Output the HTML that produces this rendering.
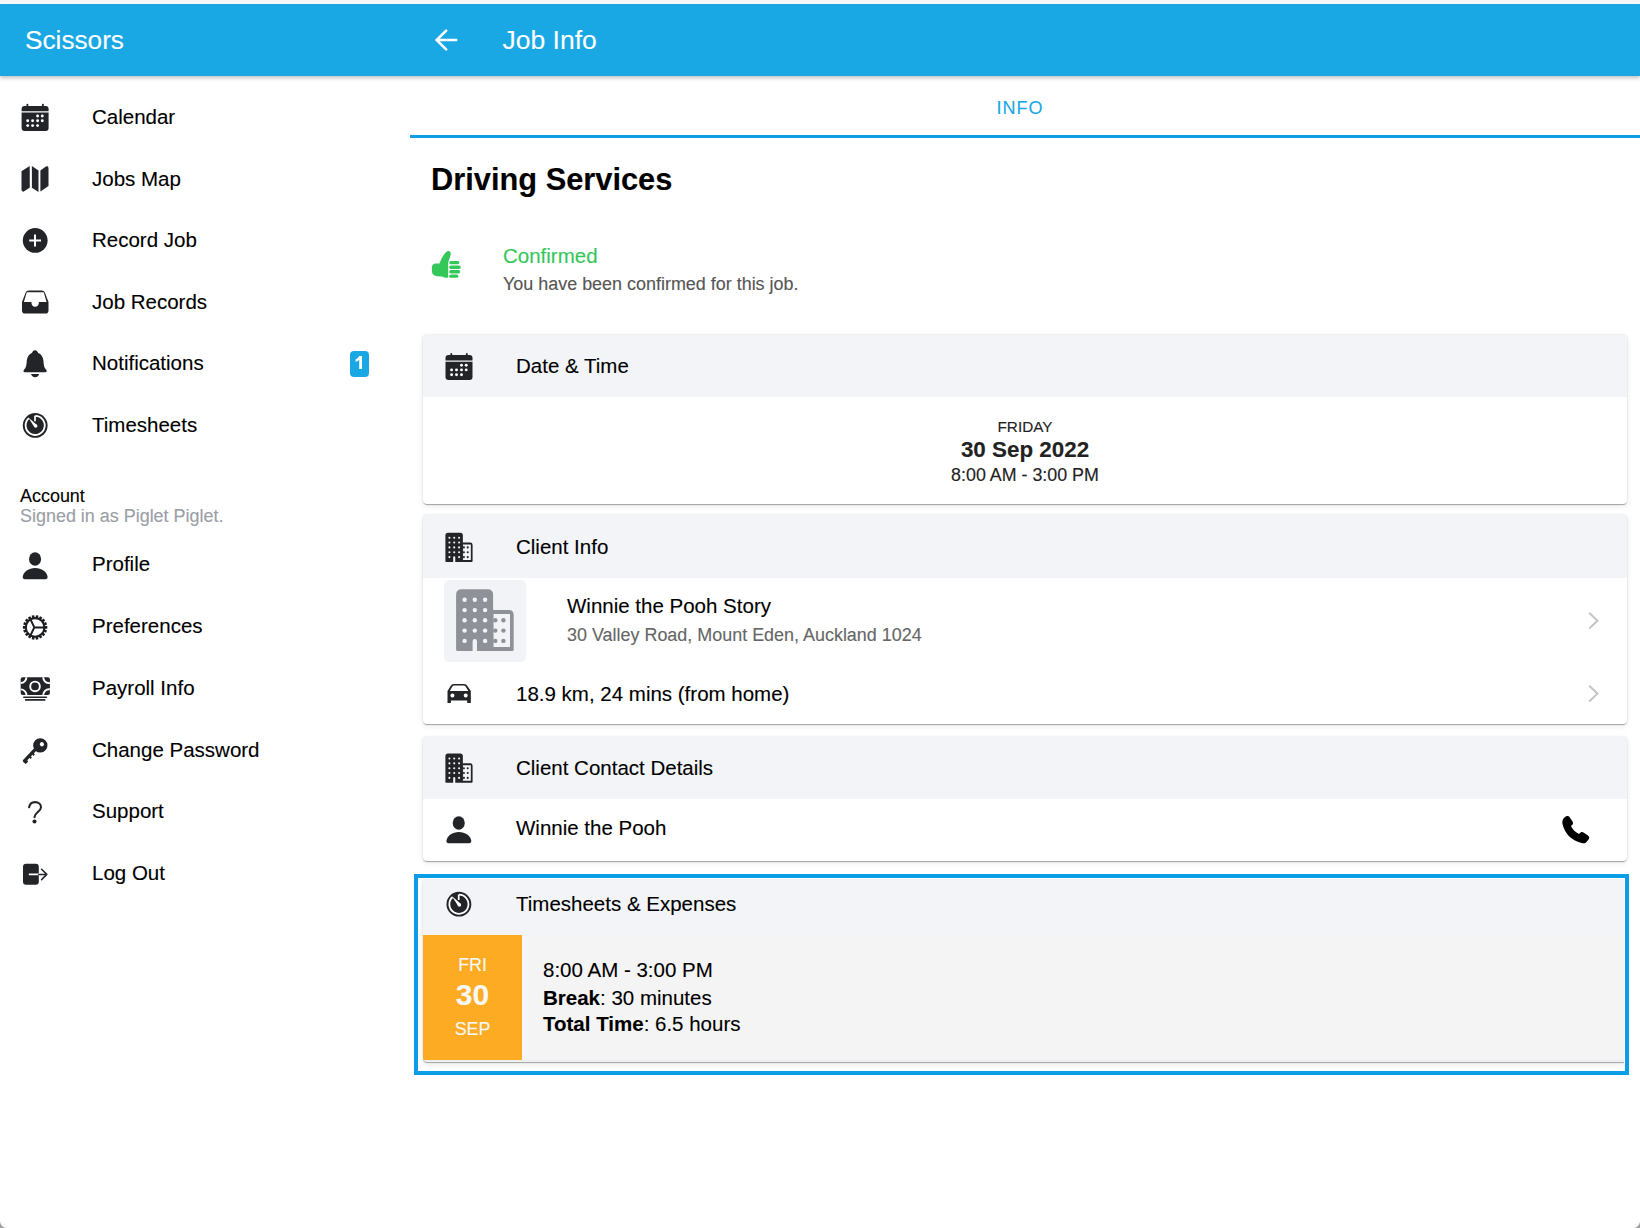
<!DOCTYPE html>
<html><head><meta charset="utf-8">
<style>
html,body{margin:0;padding:0;width:1640px;height:1228px;overflow:hidden;background:#fff;position:relative;font-family:"Liberation Sans",sans-serif;}
.t{position:absolute;line-height:1;white-space:nowrap;-webkit-text-stroke:0.12px currentColor;}
.s20{font-size:20.5px;}
.s18{font-size:17.95px;}
.hdr{position:absolute;left:0;top:4px;width:1640px;height:72px;background:#19a8e4;}
.topstrip{position:absolute;left:0;top:0;width:1640px;height:4px;background:linear-gradient(#f5f5f5 0,#f5f5f5 2px,#fbfcfd 2px,#fbfcfd 4px);}
.card{position:absolute;left:423px;width:1204px;background:#fff;border-radius:4px;box-shadow:0 0 1.5px rgba(0,0,0,.18),0 2px 1px -1px rgba(0,0,0,.22),0 1px 1px rgba(0,0,0,.1),0 2px 6px rgba(0,0,0,.09);overflow:hidden;}
.ch{position:absolute;left:0;top:0;width:100%;background:#f3f4f7;}
.c{text-align:center;}
</style></head><body>
<div class="topstrip"></div>
<div class="hdr" style="box-shadow:0 2px 4px rgba(0,0,0,.25)"></div>
<div class="t" style="left:25px;top:27px;font-size:26.2px;color:#fff">Scissors</div>
<div class="t" style="left:502.5px;top:27px;font-size:26.5px;color:#fff">Job Info</div>

<!-- sidebar -->
<div class="t s20" style="left:92px;top:107px">Calendar</div>
<div class="t s20" style="left:92px;top:169px">Jobs Map</div>
<div class="t s20" style="left:92px;top:230px">Record Job</div>
<div class="t s20" style="left:92px;top:292px">Job Records</div>
<div class="t s20" style="left:92px;top:353px">Notifications</div>
<div class="t s20" style="left:92px;top:414.7px">Timesheets</div>
<div class="t s18" style="left:20px;top:488px">Account</div>
<div class="t s18" style="left:20px;top:508px;color:#9a9ea6">Signed in as Piglet Piglet.</div>
<div class="t s20" style="left:92px;top:554.3px">Profile</div>
<div class="t s20" style="left:92px;top:616px">Preferences</div>
<div class="t s20" style="left:92px;top:677.7px">Payroll Info</div>
<div class="t s20" style="left:92px;top:739.5px">Change Password</div>
<div class="t s20" style="left:92px;top:800.7px">Support</div>
<div class="t s20" style="left:92px;top:863.1px">Log Out</div>
<div style="position:absolute;left:349.5px;top:351px;width:19.5px;height:26px;border-radius:4px;background:#19a8e4"></div>


<!-- main -->
<div class="t" style="left:410px;width:1220px;top:99px;font-size:18px;color:#19a8e4;letter-spacing:1px;text-align:center">INFO</div>
<div style="position:absolute;left:410px;top:135px;width:1230px;height:2.5px;background:#0d9fe3"></div>
<div class="t" style="left:431px;top:165px;font-size:30.8px;font-weight:bold">Driving Services</div>
<div class="t s20" style="left:503px;top:246px;color:#34c759">Confirmed</div>
<div class="t s18" style="left:503px;top:276px;color:#555">You have been confirmed for this job.</div>

<div class="card" style="top:335px;height:169px">
  <div class="ch" style="height:62px"></div>
</div>
<div class="t s20" style="left:516px;top:355.7px">Date &amp; Time</div>
<div class="t c" style="left:825px;width:400px;top:419.4px;font-size:15.3px;color:#222">FRIDAY</div>
<div class="t c" style="left:825px;width:400px;top:439px;font-size:22.4px;font-weight:bold;color:#222">30 Sep 2022</div>
<div class="t c" style="left:825px;width:400px;top:467px;font-size:17.85px;color:#222">8:00 AM - 3:00 PM</div>

<div class="card" style="top:515px;height:209px">
  <div class="ch" style="height:63px"></div>
  <div style="position:absolute;left:21px;top:65px;width:82px;height:82px;border-radius:5px;background:#f2f3f6"></div>
</div>
<div class="t s20" style="left:516px;top:537px">Client Info</div>
<div class="t s20" style="left:567px;top:596px">Winnie the Pooh Story</div>
<div class="t s18" style="left:567px;top:627px;color:#666">30 Valley Road, Mount Eden, Auckland 1024</div>
<div class="t s20" style="left:516px;top:684px">18.9 km, 24 mins (from home)</div>

<div class="card" style="top:737px;height:124px">
  <div class="ch" style="height:62px"></div>
</div>
<div class="t s20" style="left:516px;top:757.7px">Client Contact Details</div>
<div class="t s20" style="left:516px;top:817.5px">Winnie the Pooh</div>

<div class="card" style="top:880px;height:182px;background:#f2f4f8;border-radius:0 0 4px 4px">
  <div class="ch" style="height:55px"></div>
  <div style="position:absolute;left:0;top:55px;width:1204px;height:125px;background:#f4f4f4;box-shadow:0 1px 0 rgba(0,0,0,.04)"></div>
  <div style="position:absolute;left:0;top:55px;width:99px;height:125px;background:#fdab22"></div>
  <div style="position:absolute;left:100px;top:55px;width:1px;height:125px;background:#f6f8fb"></div>
</div>
<div class="t s20" style="left:516px;top:894.3px">Timesheets &amp; Expenses</div>
<div class="t c" style="left:423px;width:99px;top:957px;font-size:17.85px;color:#f7f7f7">FRI</div>
<div class="t c" style="left:423px;width:99px;top:980px;font-size:30px;font-weight:bold;color:#f7f7f7">30</div>
<div class="t c" style="left:423px;width:99px;top:1020.5px;font-size:17.85px;color:#f7f7f7">SEP</div>
<div class="t s20" style="left:543px;top:959.5px">8:00 AM - 3:00 PM</div>
<div class="t s20" style="left:543px;top:987.5px"><b>Break</b>: 30 minutes</div>
<div class="t s20" style="left:543px;top:1014px"><b>Total Time</b>: 6.5 hours</div>

<!-- highlight frame -->
<div style="position:absolute;left:414px;top:874px;width:1207px;height:193px;border:4px solid #0b9de6;box-shadow:inset 0 0 0 1px #fff"></div>

<!-- icons overlay -->
<svg style="position:absolute;left:0;top:0" width="1640" height="1228" viewBox="0 0 1640 1228">
<path d="M456,40L437,40M446,30.8L436.6,40L446,49.2" fill="none" stroke="#fff" stroke-width="2.5" stroke-linecap="square"/>
<g transform="translate(21.6,103.7) scale(1.0)" fill="#232428"><rect x="4.9" y="0" width="1.8" height="3.2" rx="0.8"/><rect x="20.4" y="0" width="1.8" height="3.2" rx="0.8"/><path d="M0,5.2Q0,2.2 3,2.2L24,2.2Q27,2.2 27,5.2L27,7.6L0,7.6Z"/><path d="M0,8.9L27,8.9L27,24.2Q27,27.2 24,27.2L3,27.2Q0,27.2 0,24.2Z"/><g fill="#fff"><circle cx="16" cy="12.3" r="1.45"/><circle cx="20.7" cy="12.3" r="1.45"/><circle cx="6.1" cy="17" r="1.45"/><circle cx="11" cy="17" r="1.45"/><circle cx="16" cy="17" r="1.45"/><circle cx="20.7" cy="17" r="1.45"/><circle cx="6.1" cy="21.9" r="1.45"/><circle cx="11" cy="21.9" r="1.45"/><circle cx="16" cy="21.9" r="1.45"/></g></g>
<g fill="#24262b"><path d="M21.5,171.3L29.7,165.9L29.8,187.5L23.8,191.6Q21.5,192 21.5,189.5Z"/><path d="M31.9,166L38.5,170.4L38.5,191.9L31.9,187.7Z"/><path d="M40.4,170.4L46.3,166.3Q48.5,165.5 48.5,168.5L48.5,186.1L40.4,191.6Z"/></g>
<circle cx="35.2" cy="240.4" r="12.4" fill="#232428"/><path d="M29.2,240.6L41,240.6M35,234.6L35,246.5" stroke="#fff" stroke-width="2"/>
<path fill="#232428" fill-rule="evenodd" d="M25.3,293.6Q26,290.6 29,290.6L41.5,290.6Q44.5,290.6 45.2,293.6L48.5,302L48.5,310.5Q48.5,313.6 45.5,313.6L25,313.6Q22,313.6 22,310.5L22,302Z M26.8,292.3L43.7,292.3L46.6,302L38.9,302Q38.9,306.8 35.2,306.8Q31.4,306.8 31.4,302L23.9,302Z"/>
<path fill="#232428" d="M35,350.2C36.6,350.2 37.6,351.5 38.2,352.9C41,354 43,356.5 43.4,360.5C43.7,365 44,367.5 46,369.5C47.3,370.8 46.8,372.2 45.3,372.2L24.9,372.2C23.4,372.2 22.9,370.8 24.2,369.5C26.2,367.5 26.5,365 26.8,360.5C27.2,356.5 29.2,354 31.9,352.9C32.5,351.5 33.4,350.2 35,350.2Z"/><path fill="#232428" d="M31.1,374.1L39.1,374.1C38.8,376 37.2,377.3 35.1,377.3C33,377.3 31.4,376 31.1,374.1Z"/>
<circle cx="35.2" cy="425.4" r="12.4" fill="#232428"/><path d="M35.20,415.85A9.55,9.55 0 1 1 28.93,418.19" fill="none" stroke="#fff" stroke-width="1.8"/><path d="M35.00,415.80L35.00,421.20" stroke="#fff" stroke-width="1.7"/><path d="M29.52,418.41L36.98,424.98L34.42,427.22L29.07,418.80Z" fill="#fff"/><circle cx="35.70" cy="426.10" r="1.75" fill="#fff"/>
<g transform="translate(22.7,552.3)" fill="#232428"><ellipse cx="12.35" cy="6.75" rx="6.05" ry="6.75"/><path d="M0,24.5C0.8,19.5 6,15.7 12.45,15.7C18.9,15.7 24.1,19.5 24.9,24.5Q25.2,26.9 23,26.9L1.9,26.9Q-0.3,26.9 0,24.5Z"/></g>
<path d="M44.50,627.40L47.30,627.40M43.93,630.61L46.56,631.57M42.30,633.44L44.45,635.24M39.80,635.54L41.20,637.97M36.73,636.66L37.22,639.41M33.47,636.66L32.98,639.41M30.40,635.54L29.00,637.97M27.90,633.44L25.75,635.24M26.27,630.61L23.64,631.57M25.70,627.40L22.90,627.40M26.27,624.19L23.64,623.23M27.90,621.36L25.75,619.56M30.40,619.26L29.00,616.83M33.47,618.14L32.98,615.39M36.73,618.14L37.22,615.39M39.80,619.26L41.20,616.83M42.30,621.36L44.45,619.56M43.93,624.19L46.56,623.23" stroke="#1d1e22" stroke-width="2.6" stroke-linecap="butt"/><circle cx="35.1" cy="627.4" r="9.3" fill="none" stroke="#1d1e22" stroke-width="2.1"/><path d="M34.30,627.40L44.30,627.40M34.30,627.40L30.50,635.37M34.30,627.40L30.50,619.43" stroke="#1d1e22" stroke-width="2.0"/>
<g fill="#232428"><path fill-rule="evenodd" d="M22.7,677.3L47.9,677.3Q49.9,677.3 49.9,679.3L49.9,693.1Q49.9,695.1 47.9,695.1L22.7,695.1Q20.7,695.1 20.7,693.1L20.7,679.3Q20.7,677.3 22.7,677.3Z"/><rect x="23" y="696.4" width="24.2" height="1.6" rx="0.8"/><rect x="24.9" y="699.1" width="20.6" height="1.7" rx="0.85"/></g><g fill="none" stroke="#fff" stroke-width="1.9"><circle cx="35.03" cy="686.4" r="4.8" stroke-width="1.9"/><path d="M20.7,683A5.7,5.7 0 0 0 26.4,677.3M43.2,677.3A5.7,5.7 0 0 0 49.9,683M49.9,689.4A5.7,5.7 0 0 0 43.2,695.1M26.4,695.1A5.7,5.7 0 0 0 20.7,689.4"/></g>
<g transform="translate(40.3,745.4) rotate(133.4)" fill="#232428"><circle cx="0" cy="0" r="7.2"/><path d="M4,-0.8L22.2,-0.8Q23.7,-0.8 23.7,0.7L23.7,1.1Q23.7,2.5 22.4,2.5L4,2.5Z"/><rect x="10.2" y="-2.3" width="2" height="2.5" rx="0.6"/><rect x="14.5" y="-2.3" width="2" height="2.5" rx="0.6"/><rect x="19.8" y="-2.3" width="3.9" height="2.5" rx="0.9"/><circle cx="-1.9" cy="-0.4" r="2.1" fill="#fff"/></g>
<path d="M29.1,807.3C29.6,804 32,802.1 35.1,802.1C38.5,802.1 41,804.3 41,807.2C41,809.6 39.4,810.8 37.6,812.2C35.6,813.8 34.6,815 34.5,817.2" fill="none" stroke="#232428" stroke-width="2.05" stroke-linecap="round"/><circle cx="34.5" cy="821.5" r="2.05" fill="#232428"/>
<path fill="#232428" d="M26,863.8L35.8,863.8Q38.8,863.8 38.8,866.8L38.8,881.8Q38.8,884.8 35.8,884.8L26,884.8Q23,884.8 23,881.8L23,866.8Q23,863.8 26,863.8Z"/><path d="M29.5,874.4L38.8,874.4" stroke="#fff" stroke-width="1.7" stroke-linecap="round"/><path d="M38.8,874.4L46.6,874.4M41.6,869.2L46.8,874.4L41.6,879.6" fill="none" stroke="#232428" stroke-width="1.5" stroke-linecap="round" stroke-linejoin="round"/>
<g fill="#34c759"><path d="M447.4,251.2C449.3,250.5 451.2,252 450.7,254.5C450.2,257 449.2,259.6 448.2,262.2L448.2,277.8L445.5,277.8C444,277.8 443.4,277 441.5,276.6C439.5,276.2 436,276.4 434.5,275.5C432.5,274.5 431.9,272.8 431.9,270.5L431.9,267.5C431.9,265 433.5,263.6 436,263.6L439.5,263.6C441,259.5 444,253 447.4,251.2Z"/><rect x="449.2" y="260.9" width="10.2" height="3.3" rx="1.65"/><rect x="449.2" y="265.5" width="11.5" height="3.4" rx="1.7"/><rect x="449.2" y="269.9" width="11" height="3.5" rx="1.75"/><rect x="449.2" y="274.5" width="9.2" height="3.3" rx="1.65"/></g>
<g transform="translate(445.5,352.9) scale(1.0)" fill="#232428"><rect x="4.9" y="0" width="1.8" height="3.2" rx="0.8"/><rect x="20.4" y="0" width="1.8" height="3.2" rx="0.8"/><path d="M0,5.2Q0,2.2 3,2.2L24,2.2Q27,2.2 27,5.2L27,7.6L0,7.6Z"/><path d="M0,8.9L27,8.9L27,24.2Q27,27.2 24,27.2L3,27.2Q0,27.2 0,24.2Z"/><g fill="#fff"><circle cx="16" cy="12.3" r="1.45"/><circle cx="20.7" cy="12.3" r="1.45"/><circle cx="6.1" cy="17" r="1.45"/><circle cx="11" cy="17" r="1.45"/><circle cx="16" cy="17" r="1.45"/><circle cx="20.7" cy="17" r="1.45"/><circle cx="6.1" cy="21.9" r="1.45"/><circle cx="11" cy="21.9" r="1.45"/><circle cx="16" cy="21.9" r="1.45"/></g></g>
<g transform="translate(445.4,532.7) scale(0.472)"><path fill="#232428" d="M0,5.5Q0,0 5.5,0L31.5,0Q37,0 37,5.5L37,61.9L20.9,61.9L20.9,52A2.2,2.2 0 0 0 16.5,52L16.5,61.9L1.5,61.9Q0,61.9 0,60.4Z"/><path fill="#232428" fill-rule="evenodd" d="M35.9,20.9L52.6,20.9Q57.6,20.9 57.6,25.9L57.6,60.4Q57.6,61.9 56.1,61.9L35.9,61.9ZM37.4,24.9L53.9,24.9L53.9,57.9L37.4,57.9Z"/><circle cx="8.5" cy="10.6" r="2.2" fill="#f3f4f7"/><circle cx="8.5" cy="20.9" r="2.2" fill="#f3f4f7"/><circle cx="8.5" cy="31.1" r="2.2" fill="#f3f4f7"/><circle cx="8.5" cy="41.4" r="2.2" fill="#f3f4f7"/><circle cx="8.5" cy="51.7" r="2.2" fill="#f3f4f7"/><circle cx="18.7" cy="10.6" r="2.2" fill="#f3f4f7"/><circle cx="18.7" cy="20.9" r="2.2" fill="#f3f4f7"/><circle cx="18.7" cy="31.1" r="2.2" fill="#f3f4f7"/><circle cx="18.7" cy="41.4" r="2.2" fill="#f3f4f7"/><circle cx="29" cy="10.6" r="2.2" fill="#f3f4f7"/><circle cx="29" cy="20.9" r="2.2" fill="#f3f4f7"/><circle cx="29" cy="31.1" r="2.2" fill="#f3f4f7"/><circle cx="29" cy="41.4" r="2.2" fill="#f3f4f7"/><circle cx="29" cy="51.7" r="2.2" fill="#f3f4f7"/><circle cx="39.2" cy="31.1" r="2.2" fill="#232428"/><circle cx="39.2" cy="41.4" r="2.2" fill="#232428"/><circle cx="39.2" cy="51.7" r="2.2" fill="#232428"/><circle cx="47.3" cy="31.1" r="2.2" fill="#232428"/><circle cx="47.3" cy="41.4" r="2.2" fill="#232428"/><circle cx="47.3" cy="51.7" r="2.2" fill="#232428"/></g>
<g transform="translate(445.4,753.5) scale(0.472)"><path fill="#232428" d="M0,5.5Q0,0 5.5,0L31.5,0Q37,0 37,5.5L37,61.9L20.9,61.9L20.9,52A2.2,2.2 0 0 0 16.5,52L16.5,61.9L1.5,61.9Q0,61.9 0,60.4Z"/><path fill="#232428" fill-rule="evenodd" d="M35.9,20.9L52.6,20.9Q57.6,20.9 57.6,25.9L57.6,60.4Q57.6,61.9 56.1,61.9L35.9,61.9ZM37.4,24.9L53.9,24.9L53.9,57.9L37.4,57.9Z"/><circle cx="8.5" cy="10.6" r="2.2" fill="#f3f4f7"/><circle cx="8.5" cy="20.9" r="2.2" fill="#f3f4f7"/><circle cx="8.5" cy="31.1" r="2.2" fill="#f3f4f7"/><circle cx="8.5" cy="41.4" r="2.2" fill="#f3f4f7"/><circle cx="8.5" cy="51.7" r="2.2" fill="#f3f4f7"/><circle cx="18.7" cy="10.6" r="2.2" fill="#f3f4f7"/><circle cx="18.7" cy="20.9" r="2.2" fill="#f3f4f7"/><circle cx="18.7" cy="31.1" r="2.2" fill="#f3f4f7"/><circle cx="18.7" cy="41.4" r="2.2" fill="#f3f4f7"/><circle cx="29" cy="10.6" r="2.2" fill="#f3f4f7"/><circle cx="29" cy="20.9" r="2.2" fill="#f3f4f7"/><circle cx="29" cy="31.1" r="2.2" fill="#f3f4f7"/><circle cx="29" cy="41.4" r="2.2" fill="#f3f4f7"/><circle cx="29" cy="51.7" r="2.2" fill="#f3f4f7"/><circle cx="39.2" cy="31.1" r="2.2" fill="#232428"/><circle cx="39.2" cy="41.4" r="2.2" fill="#232428"/><circle cx="39.2" cy="51.7" r="2.2" fill="#232428"/><circle cx="47.3" cy="31.1" r="2.2" fill="#232428"/><circle cx="47.3" cy="41.4" r="2.2" fill="#232428"/><circle cx="47.3" cy="51.7" r="2.2" fill="#232428"/></g>
<g transform="translate(456.1,589.2) scale(1.0)"><path fill="#8f9199" d="M0,5.5Q0,0 5.5,0L31.5,0Q37,0 37,5.5L37,61.9L20.9,61.9L20.9,52A2.2,2.2 0 0 0 16.5,52L16.5,61.9L1.5,61.9Q0,61.9 0,60.4Z"/><path fill="#8f9199" fill-rule="evenodd" d="M35.9,20.9L52.6,20.9Q57.6,20.9 57.6,25.9L57.6,60.4Q57.6,61.9 56.1,61.9L35.9,61.9ZM37.4,24.9L53.9,24.9L53.9,57.9L37.4,57.9Z"/><circle cx="8.5" cy="10.6" r="2.2" fill="#f2f3f7"/><circle cx="8.5" cy="20.9" r="2.2" fill="#f2f3f7"/><circle cx="8.5" cy="31.1" r="2.2" fill="#f2f3f7"/><circle cx="8.5" cy="41.4" r="2.2" fill="#f2f3f7"/><circle cx="8.5" cy="51.7" r="2.2" fill="#f2f3f7"/><circle cx="18.7" cy="10.6" r="2.2" fill="#f2f3f7"/><circle cx="18.7" cy="20.9" r="2.2" fill="#f2f3f7"/><circle cx="18.7" cy="31.1" r="2.2" fill="#f2f3f7"/><circle cx="18.7" cy="41.4" r="2.2" fill="#f2f3f7"/><circle cx="29" cy="10.6" r="2.2" fill="#f2f3f7"/><circle cx="29" cy="20.9" r="2.2" fill="#f2f3f7"/><circle cx="29" cy="31.1" r="2.2" fill="#f2f3f7"/><circle cx="29" cy="41.4" r="2.2" fill="#f2f3f7"/><circle cx="29" cy="51.7" r="2.2" fill="#f2f3f7"/><circle cx="39.2" cy="31.1" r="2.2" fill="#8f9199"/><circle cx="39.2" cy="41.4" r="2.2" fill="#8f9199"/><circle cx="39.2" cy="51.7" r="2.2" fill="#8f9199"/><circle cx="47.3" cy="31.1" r="2.2" fill="#8f9199"/><circle cx="47.3" cy="41.4" r="2.2" fill="#8f9199"/><circle cx="47.3" cy="51.7" r="2.2" fill="#8f9199"/></g>
<path fill="#232428" fill-rule="evenodd" d="M453.8,683.9L464.2,683.9Q466.5,683.9 467.4,686L470.8,690.9L470.8,703L467.2,703L467.2,700.4L450.9,700.4L450.9,703L447.5,703L447.5,690.9L450.6,686Q451.5,683.9 453.8,683.9Z M454.3,685.6L463.7,685.6Q465.2,685.6 465.9,686.9L468.3,690.9L449.8,690.9L452.1,686.9Q452.8,685.6 454.3,685.6Z M452.4,693.5A2,2 0 1 0 452.41,693.5Z M465.7,693.5A2,2 0 1 0 465.71,693.5Z"/>
<path d="M1589.2,612.8L1597.4,620.7L1589.2,628.6M1589.2,685.7L1597.4,693.6L1589.2,701.5" fill="none" stroke="#c4c4c4" stroke-width="2"/>
<g transform="translate(446.4,816.3)" fill="#232428"><ellipse cx="12.35" cy="6.75" rx="6.05" ry="6.75"/><path d="M0,24.5C0.8,19.5 6,15.7 12.45,15.7C18.9,15.7 24.1,19.5 24.9,24.5Q25.2,26.9 23,26.9L1.9,26.9Q-0.3,26.9 0,24.5Z"/></g>
<path fill="#000" d="M1564.5,817.5C1566,816 1568.5,815.5 1569.5,817L1572.5,821.5C1573.5,823 1573,824.5 1571.5,825.5L1571,826C1572.5,829.5 1575.5,832.5 1579,834L1579.5,833.5C1580.5,832 1582,831.5 1583.5,832.5L1588,835.5C1589.5,836.5 1589.5,838.5 1588.5,839.5L1586.5,842C1585.5,843.3 1583.5,843.5 1581.5,843C1571,840 1565,834 1562.5,824C1562,821.5 1562.5,819 1564.5,817.5Z"/>
<circle cx="458.9" cy="904.2" r="12.4" fill="#232428"/><path d="M458.90,894.65A9.55,9.55 0 1 1 452.63,896.99" fill="none" stroke="#fff" stroke-width="1.8"/><path d="M458.70,894.60L458.70,900.00" stroke="#fff" stroke-width="1.7"/><path d="M453.22,897.21L460.68,903.78L458.12,906.02L452.77,897.60Z" fill="#fff"/><circle cx="459.40" cy="904.90" r="1.75" fill="#fff"/>
<path fill="#fff" d="M359.2,356L362,356L362,368.9L359.2,368.9L359.2,360Q357.7,361.3 355.6,361.9L355.6,359.5Q357.9,358.7 359.2,356Z"/>
<path d="M0,1221.8A7,7 0 0 0 7.5,1228L0,1228Z" fill="#a0a0a0"/><path d="M1640,1221.8A7,7 0 0 1 1632.5,1228L1640,1228Z" fill="#a0a0a0"/>
</svg>
</body></html>
